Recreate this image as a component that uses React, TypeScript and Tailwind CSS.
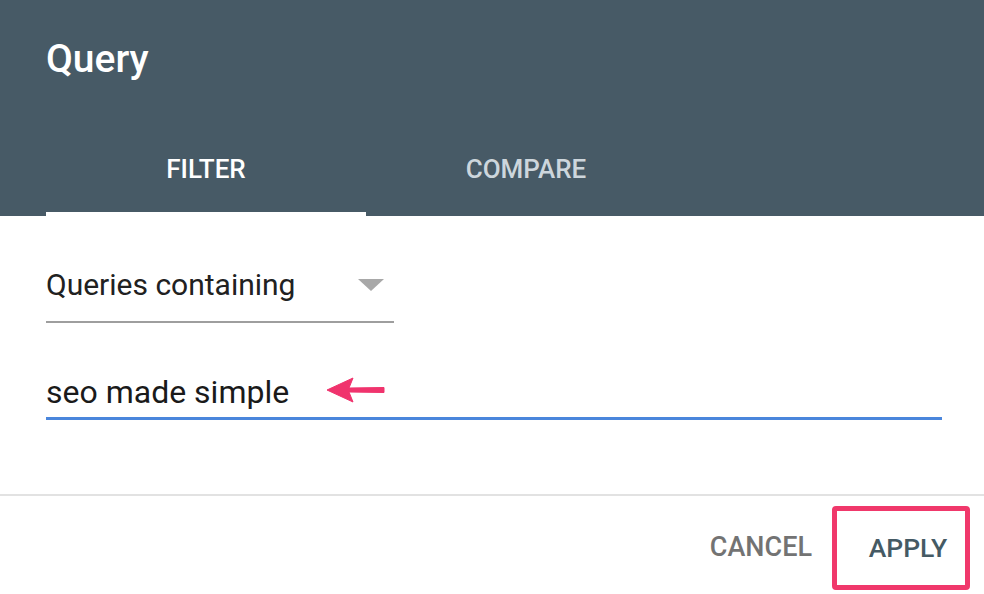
import React from "react";

export default function App() {
  return (
    <div
      className="w-[984px] h-[594px] bg-white overflow-hidden flex flex-col"
      style={{ fontFamily: "Roboto, 'Liberation Sans', sans-serif" }}
    >
      <div className="h-[216px] bg-[#475a66] flex flex-col px-[46px]">
        <div className="pt-[34px] h-[120px] text-white text-[39px] font-medium leading-[50px]">
          Query
        </div>
        <div className="flex flex-1">
          <div className="w-[320px] flex flex-col">
            <div className="flex-1 flex items-center justify-center text-white text-[26px] font-medium pt-[6px]">
              FILTER
            </div>
            <div className="h-[4px] bg-white" />
          </div>
          <div className="w-[320px] flex flex-col">
            <div className="flex-1 flex items-center justify-center text-[#cdd6dc] text-[26px] font-medium pt-[6px]">
              COMPARE
            </div>
            <div className="h-[4px]" />
          </div>
        </div>
      </div>
      <div className="h-[278px] px-[46px] flex flex-col">
        <div className="w-[348px] mt-[50px] h-[57px] flex items-start justify-between border-b-2 border-[#9e9e9e]">
          <span className="text-[30px] text-[#212121] leading-[40px] mt-[-1px]">Queries containing</span>
          <svg width="26" height="14" viewBox="0 0 26 14" className="mt-[13px] mr-[10px]">
            <polygon points="0,0 26,0 13,12" fill="#a8a8a8" />
          </svg>
        </div>
        <div className="w-[896px] mt-[50px] h-[47px] flex items-start border-b-[3px] border-[#4a86dc] relative">
          <span className="text-[32px] text-[#1a1a1a] leading-[40px] mt-[-1px]">seo made simple</span>
          <svg width="64" height="30" viewBox="0 0 64 30" className="absolute left-[278px] top-[2px]">
            <polygon points="3,15 29,3 25,13 60,12.5 60,17.5 25,17 29,27" fill="#f0336d" strokeLinejoin="round" stroke="#f0336d" strokeWidth="1" />
          </svg>
        </div>
      </div>
      <div className="h-[2px] bg-[#e2e2e2]" />
      <div className="flex-1 flex items-center justify-end pr-[14px]">
        <div className="text-[27px] font-medium text-[#737373] mr-[20px] mt-[4px]">CANCEL</div>
        <div className="w-[138px] h-[84px] border-[5px] border-[#f0386b] rounded-[4px] flex items-center justify-center mt-[6px]">
          <span className="text-[26.5px] font-medium text-[#455a64] ml-[14px] mt-[-1px]">APPLY</span>
        </div>
      </div>
    </div>
  );
}
